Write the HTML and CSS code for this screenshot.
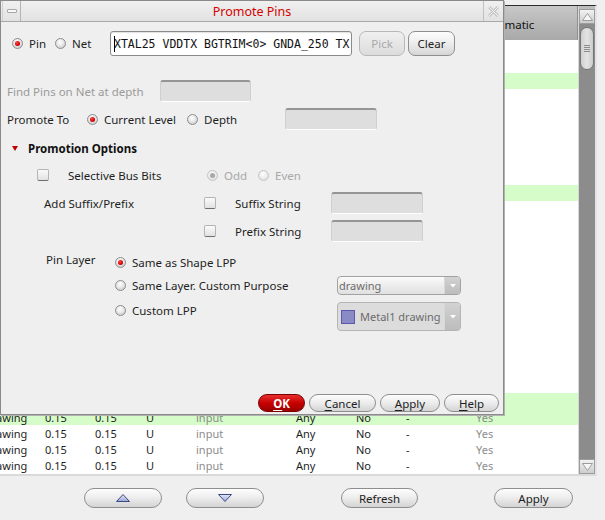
FILE: index.html
```html
<!DOCTYPE html>
<html>
<head>
<meta charset="utf-8">
<title>Promote Pins</title>
<link rel="stylesheet" href="styles.css">
</head>
<body>
<div class="bgwin">
  <div class="frame">
    <div class="tablecol">
      <div class="thead"><span class="hcell">Schematic</span></div>
      <div class="tbody">
        <div class="tr"></div>
        <div class="tr"></div>
        <div class="tr sel"></div>
        <div class="tr"></div>
        <div class="tr"></div>
        <div class="tr"></div>
        <div class="tr"></div>
        <div class="tr"></div>
        <div class="tr"></div>
        <div class="tr sel"></div>
        <div class="tr"></div>
        <div class="tr"></div>
        <div class="tr"></div>
        <div class="tr"></div>
        <div class="tr"></div>
        <div class="tr"></div>
        <div class="tr"></div>
        <div class="tr"></div>
        <div class="tr"></div>
        <div class="tr"></div>
        <div class="tr"></div>
        <div class="tr"></div>
        <div class="tr sel"></div>
        <div class="tr sel"><span class="td c1">drawing</span><span class="td c2">0.15</span><span class="td c3">0.15</span><span class="td c4">U</span><span class="td c5 dim">input</span><span class="td c6">Any</span><span class="td c7">No</span><span class="td c8">-</span><span class="td c9 dim">Yes</span></div>
        <div class="tr"><span class="td c1">drawing</span><span class="td c2">0.15</span><span class="td c3">0.15</span><span class="td c4">U</span><span class="td c5 dim">input</span><span class="td c6">Any</span><span class="td c7">No</span><span class="td c8">-</span><span class="td c9 dim">Yes</span></div>
        <div class="tr"><span class="td c1">drawing</span><span class="td c2">0.15</span><span class="td c3">0.15</span><span class="td c4">U</span><span class="td c5 dim">input</span><span class="td c6">Any</span><span class="td c7">No</span><span class="td c8">-</span><span class="td c9 dim">Yes</span></div>
        <div class="tr"><span class="td c1">drawing</span><span class="td c2">0.15</span><span class="td c3">0.15</span><span class="td c4">U</span><span class="td c5 dim">input</span><span class="td c6">Any</span><span class="td c7">No</span><span class="td c8">-</span><span class="td c9 dim">Yes</span></div>
      </div>
    </div>
    <div class="vscroll">
      <div class="sbtn"><svg width="11" height="8" viewBox="0 0 11 8"><polygon points="5.5,0.5 10.5,7.5 0.5,7.5" fill="#f6f6f6" stroke="#9c9c9c" stroke-width="1"/></svg></div>
      <div class="track"><div class="thumb"><i class="grip"></i><i class="grip"></i><i class="grip"></i><i class="grip"></i></div></div>
      <div class="sbtn"><svg width="11" height="8" viewBox="0 0 11 8"><polygon points="0.5,0.5 10.5,0.5 5.5,7.5" fill="#f6f6f6" stroke="#9c9c9c" stroke-width="1"/></svg></div>
    </div>
  </div>
  <div class="bbar">
    <div class="pill b-up"><svg width="14" height="8" viewBox="0 0 14 8"><defs><linearGradient id="ga" x1="0" y1="0" x2="0" y2="1"><stop offset="0" stop-color="#e4e8f8"/><stop offset="1" stop-color="#9aa6d4"/></linearGradient></defs><polygon points="7,0.5 13.5,7.5 0.5,7.5" fill="url(#ga)" stroke="#3c4a82" stroke-width="1"/></svg></div>
    <div class="pill b-down"><svg width="14" height="8" viewBox="0 0 14 8"><defs><linearGradient id="gb" x1="0" y1="0" x2="0" y2="1"><stop offset="0" stop-color="#e4e8f8"/><stop offset="1" stop-color="#9aa6d4"/></linearGradient></defs><polygon points="0.5,0.5 13.5,0.5 7,7.5" fill="url(#gb)" stroke="#3c4a82" stroke-width="1"/></svg></div>
    <div class="pill b-refresh">Refresh</div>
    <div class="pill b-apply">Apply</div>
  </div>
</div>

<div class="dialog">
  <div class="titlebar">
    <div class="tbox tmin"><span class="minbar"></span></div>
    <div class="ttitle">Promote Pins</div>
    <div class="tbox tclose"><svg width="11" height="11" viewBox="0 0 11 11"><path d="M1,1 L10,10 M10,1 L1,10" stroke="#c4c4c4" stroke-width="3" fill="none"/><path d="M1,1 L10,10 M10,1 L1,10" stroke="#f4f4f4" stroke-width="1" fill="none"/></svg></div>
  </div>
  <div class="dbody">
    <div class="row r1">
      <label class="opt w-pin"><span class="radio on"></span>Pin</label>
      <label class="opt w-net"><span class="radio"></span>Net</label>
      <div class="tfield"><span class="caret"></span>XTAL25 VDDTX BGTRIM&lt;0&gt; GNDA_250 TX</div>
      <div class="btn pick">Pick</div>
      <div class="btn clear">Clear</div>
    </div>
    <div class="row r-find">
      <span class="lbl dis w-find">Find Pins on Net at depth</span>
      <div class="dfield"></div>
    </div>
    <div class="row r-prom">
      <span class="lbl w-prom">Promote To</span>
      <label class="opt w-cur"><span class="radio on"></span>Current Level</label>
      <label class="opt w-depth"><span class="radio"></span>Depth</label>
      <div class="dfield w92"></div>
    </div>
    <div class="row r-sec">
      <span class="tri"></span>
      <span class="sec">Promotion Options</span>
    </div>
    <div class="row r-sel">
      <label class="opt w-sel"><span class="check"></span>Selective Bus Bits</label>
      <label class="opt dis w-odd"><span class="radio on disr"></span>Odd</label>
      <label class="opt dis"><span class="radio disr"></span>Even</label>
    </div>
    <div class="row r-suf">
      <span class="lbl w-suf">Add Suffix/Prefix</span>
      <label class="opt w-sfx"><span class="check"></span>Suffix String</label>
      <div class="dfield w92"></div>
    </div>
    <div class="row r-pre">
      <span class="lbl w-suf"></span>
      <label class="opt w-sfx"><span class="check"></span>Prefix String</label>
      <div class="dfield w92"></div>
    </div>
    <div class="pl">
      <div class="pl-row pa">
        <span class="lbl pl-label">Pin Layer</span>
        <label class="opt w-pl"><span class="radio on"></span>Same as Shape LPP</label>
      </div>
      <div class="pl-row pb">
        <span class="lbl pl-label"></span>
        <label class="opt w-pl"><span class="radio"></span>Same Layer. Custom Purpose</label>
        <div class="combo"><span class="val">drawing</span><span class="arr"><svg width="6" height="4" viewBox="0 0 6 4"><polygon points="0,0 6,0 3,3.5" fill="#fff"/></svg></span></div>
      </div>
      <div class="pl-row pc">
        <span class="lbl pl-label"></span>
        <label class="opt w-pl top"><span class="radio"></span>Custom LPP</label>
        <div class="combo big"><span class="val"><span class="swatch"></span>Metal1 drawing</span><span class="arr"><svg width="6" height="4" viewBox="0 0 6 4"><polygon points="0,0 6,0 3,3.5" fill="#fff"/></svg></span></div>
      </div>
    </div>
  </div>
  <div class="dfoot">
    <div class="dbtn ok"><u>O</u>K</div>
    <div class="dbtn w-cancel"><u>C</u>ancel</div>
    <div class="dbtn w-apply"><u>A</u>pply</div>
    <div class="dbtn w-help"><u>H</u>elp</div>
  </div>
</div>
</body>
</html>
```

FILE: styles.css
```css
* { box-sizing: border-box; }
html, body { margin: 0; padding: 0; }
body {
  width: 605px;
  height: 520px;
  overflow: hidden;
  position: relative;
  background: #efefef;
  font-family: "Noto Sans", "DejaVu Sans", sans-serif;
  font-size: 11.5px;
  color: #1e1e1e;
}

/* ---------- background window ---------- */
.bgwin { margin-left: -16px; padding-top: 5px; width: 613px; }
.frame {
  display: flex;
  gap: 1px;
  width: 613px;
  border-top: 1px solid #2b2b2b;
  border-bottom: 2px solid #dadada;
  border-right: 2px solid #e4e4e4;
  background: #d8d8d8;
}
.tablecol { width: 594px; display: flex; flex-direction: column; }
.thead {
  height: 34px;
  display: flex;
  align-items: center;
  padding-left: 495px;
  padding-top: 3px;
  background: linear-gradient(#c8c8c8, #b6b6b6 55%, #a9a9a9);
  border-right: 1px solid #8f8f8f;
  color: #111;
  font-size: 11.5px;
}
.tbody { background: #fff; padding-top: 1px; height: 434px; }
.tr { display: flex; align-items: center; height: 16px; padding-left: 1px; font-size: 11px; color: #1e1e1e; white-space: nowrap; }
.tr.sel { background: #d6fcc9; }
.td { display: block; }
.c1 { width: 60px; }
.c2 { width: 50px; }
.c3 { width: 51px; }
.c4 { width: 50px; }
.c5 { width: 100px; }
.c6 { width: 60px; }
.c7 { width: 50px; }
.c8 { width: 70px; }
.c9 { width: 40px; }
.dim { color: #8c8c8c; }

.vscroll {
  width: 16px;
  display: flex;
  flex-direction: column;
  padding-top: 3px;
  background: #bcbcbc;
}
.sbtn {
  height: 15px;
  display: flex;
  align-items: center;
  justify-content: center;
  background: linear-gradient(#f2f2f2, #cdcdcd);
  border: 1px solid #9c9c9c;
}
.track { flex: 1; background: #8c8c8c; padding: 3px 1px 0 1px; }
.thumb {
  height: 43px;
  border-radius: 7px;
  border: 1px solid #777;
  background: linear-gradient(90deg, #cfcfcf, #e4e4e4 50%, #cbcbcb);
  display: flex;
  flex-direction: column;
  align-items: center;
  justify-content: center;
  gap: 1px;
}
.grip { display: block; width: 6px; height: 1px; background: #8a8a8a; }

.bbar { display: flex; margin-top: 12px; padding-left: 100px; }
.pill {
  height: 20px;
  border-radius: 10px;
  border: 1px solid #8e8e8e;
  background: linear-gradient(#fdfdfd, #eeeeee 45%, #d4d4d4);
  display: flex;
  align-items: center;
  justify-content: center;
  font-size: 11.5px;
  color: #222;
}
.b-up { width: 78px; }
.b-down { width: 78px; margin-left: 24px; }
.b-refresh { width: 77px; margin-left: 77px; }
.b-apply { width: 79px; margin-left: 76px; }

/* ---------- dialog ---------- */
.dialog {
  position: absolute;
  left: 0;
  top: 0;
  width: 504px;
  height: 415px;
  border: 1px solid #8a8a8a;
  box-shadow: 1px 1px 0 #b2b2b2;
  background: #efefef;
  display: flex;
  flex-direction: column;
}
.titlebar {
  height: 21px;
  display: flex;
  border-bottom: 1px solid #a9a9a9;
  background: linear-gradient(#f0f0f0, #e2e2e2);
}
.tbox { width: 19px; display: flex; align-items: center; justify-content: center; }
.tmin { margin-left: 1px; border-left: 1px solid #d0d0d0; border-right: 1px solid #b4b4b4; }
.minbar { width: 10px; height: 4px; border: 1px solid #a8a8a8; border-radius: 1px; background: #f8f8f8; }
.tclose { border-left: 1px solid #c0c0c0; margin-right: 1px; }
.ttitle {
  flex: 1;
  display: flex;
  align-items: center;
  justify-content: center;
  color: #d40000;
  font-size: 12.5px;
}

.dbody { flex: 1; }
.row { display: flex; align-items: center; }
.r1 { margin-top: 9px; height: 25px; padding-left: 11px; }
.r-find { margin-top: 24px; height: 22px; padding-left: 6px; }
.r-prom { margin-top: 6px; height: 22px; padding-left: 6px; }
.r-sec { margin-top: 8px; height: 20px; padding-left: 11px; }
.r-sel { margin-top: 7px; height: 20px; padding-left: 36px; }
.r-suf { margin-top: 7px; height: 22px; padding-left: 43px; }
.r-pre { margin-top: 6px; height: 22px; padding-left: 43px; }

.opt { display: flex; align-items: center; white-space: nowrap; }
.opt.dis { color: #a8a8a8; }
.lbl { white-space: nowrap; }
.lbl.dis { color: #9a9a9a; }
.w-pin { width: 43px; }
.w-net { width: 55px; }
.w-find { width: 153px; }
.w-prom { width: 80px; }
.w-cur { width: 100px; }
.w-depth { width: 98px; }
.w-sel { width: 170px; }
.w-odd { width: 51px; }
.w-suf { width: 160px; }
.w-sfx { width: 127px; }

.radio {
  width: 11px;
  height: 11px;
  margin-right: 6px;
  border-radius: 50%;
  border: 1px solid #8d8d8d;
  background: radial-gradient(circle at 45% 35%, #ffffff, #e8e8e8 45%, #bdbdbd);
  display: flex;
  align-items: center;
  justify-content: center;
  flex: none;
}
.radio.on::after {
  content: "";
  width: 5px;
  height: 5px;
  border-radius: 50%;
  background: radial-gradient(circle at 40% 35%, #ff4a4a, #d00000 60%, #a00000);
}
.radio.disr { border-color: #c4c4c4; background: radial-gradient(circle at 45% 35%, #ffffff, #ececec 50%, #d6d6d6); }
.radio.disr.on::after { background: #a8a8a8; }

.check {
  width: 12px;
  height: 12px;
  margin-right: 19px;
  flex: none;
  border: 1px solid #b4b4b4;
  border-bottom-color: #6e6e6e;
  border-radius: 2px;
  background: linear-gradient(#fbfbfb, #e2e2e2);
}

.tfield {
  width: 242px;
  height: 25px;
  display: flex;
  align-items: center;
  padding-left: 3px;
  background: #fff;
  border: 1px solid #8a8a8a;
  border-radius: 3px;
  box-shadow: inset 0 1px 1px rgba(0,0,0,0.12);
  font-family: "DejaVu Sans Mono", "Liberation Mono", monospace;
  font-size: 11.5px;
  color: #111;
  white-space: nowrap;
  overflow: hidden;
}
.caret { width: 1px; height: 16px; background: #000; margin-right: -1px; flex: none; }

.btn {
  height: 25px;
  border-radius: 7px;
  display: flex;
  align-items: center;
  justify-content: center;
  font-size: 11.5px;
}
.pick {
  width: 46px;
  margin-left: 7px;
  color: #a9a9a9;
  border: 1px solid #b8b8b8;
  background: linear-gradient(#f0f0f0, #dcdcdc);
}
.clear {
  width: 47px;
  margin-left: 3px;
  color: #1e1e1e;
  border: 1px solid #8e8e8e;
  background: linear-gradient(#fdfdfd, #ececec 50%, #d6d6d6);
}

.dfield {
  width: 91px;
  height: 22px;
  background: #dedede;
  border: 1px solid #cfcfcf;
  border-top: 2px solid #959595;
  border-bottom: 1px solid #ffffff;
  border-radius: 3px;
}
.w92 { width: 92px; }

.tri {
  width: 0;
  height: 0;
  border-left: 3px solid transparent;
  border-right: 3px solid transparent;
  border-top: 5px solid #c00000;
  margin-right: 10px;
  margin-top: 1px;
}
.sec { font-weight: bold; font-size: 11.5px; color: #111; }

.pl { margin-top: 11px; padding-left: 45px; }
.pl-row { display: flex; align-items: center; }
.pa { height: 18px; }
.pb { height: 19px; margin-top: 5px; }
.pc { height: 29px; margin-top: 7px; align-items: flex-start; }
.pl-label { width: 69px; align-self: flex-start; line-height: 14px; }
.pb .pl-label, .pc .pl-label { height: 1px; }
.w-pl { width: 222px; }
.opt.top { height: 16px; }

.combo {
  width: 124px;
  height: 19px;
  display: flex;
  border: 1px solid #a2a2a2;
  border-radius: 4px;
  overflow: hidden;
  background: linear-gradient(#fbfbfb, #eeeeee 45%, #e0e0e0);
}
.combo .val {
  flex: 1;
  display: flex;
  align-items: center;
  padding-left: 1px;
  color: #6c6c6c;
  font-size: 11px;
}
.combo .arr {
  width: 16px;
  display: flex;
  align-items: center;
  justify-content: center;
  background: linear-gradient(#d2d2d2, #bcbcbc);
  border-left: 1px solid #d8d8d8;
}
.combo.big { height: 29px; background: #dcdcdc; border-color: #b4b4b4; }
.combo.big .val { padding-left: 3px; }
.swatch {
  width: 14px;
  height: 14px;
  margin-right: 5px;
  border: 1px solid #5a5aa8;
  background: #8a8ac6;
}

.dfoot {
  display: flex;
  justify-content: flex-end;
  gap: 4px;
  padding: 0 4px 2px 0;
}
.dbtn {
  height: 18px;
  border-radius: 9px;
  display: flex;
  align-items: center;
  justify-content: center;
  border: 1px solid #8e8e8e;
  background: linear-gradient(#fdfdfd, #ececec 50%, #d4d4d4);
  font-size: 11.5px;
  color: #1e1e1e;
}
.dbtn u { text-decoration: underline; text-underline-offset: 2px; }
.ok {
  width: 47px;
  color: #fff;
  font-weight: bold;
  border-color: #7a0000;
  background: linear-gradient(#e83030, #c80000 50%, #9a0000);
}
.w-cancel { width: 67px; }
.w-apply { width: 60px; }
.w-help { width: 55px; }
```
